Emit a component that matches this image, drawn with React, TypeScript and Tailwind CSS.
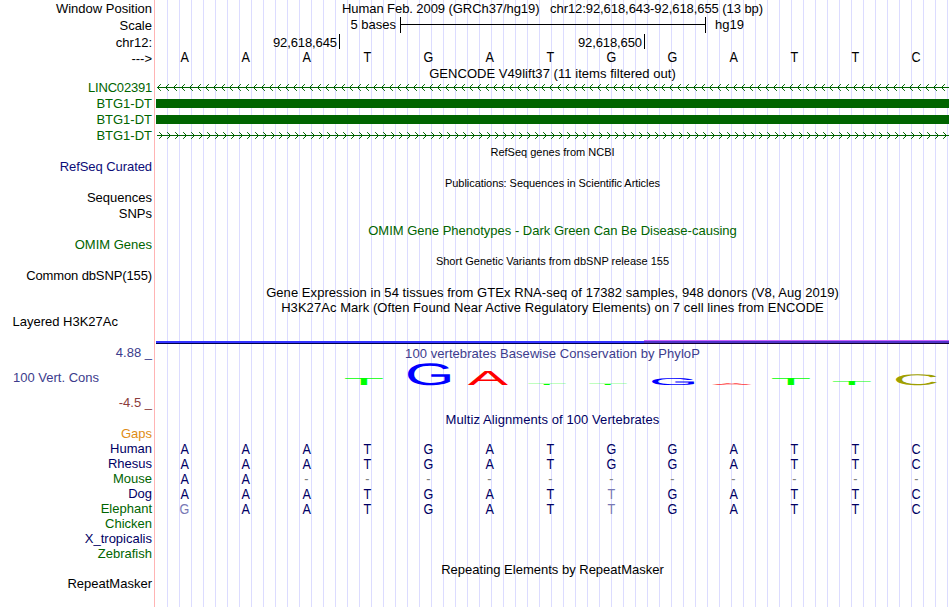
import React from 'react';

type Tone = 'black' | 'green' | 'navy' | 'blue' | 'plum' | 'maroon' | 'orange';

const tones: Record<Tone, string> = {
  black: 'text-black',
  green: 'text-[#006400]',
  navy: 'text-[#000064]',
  blue: 'text-[#0c0c78]',
  plum: 'text-[#3c3c8c]',
  maroon: 'text-[#8c3c3c]',
  orange: 'text-[#e08c14]',
};

const Label: React.FC<{ text: string; tone?: Tone; className?: string }> = ({ text, tone = 'black', className = 'h-4' }) => (
  <div className={`flex shrink-0 items-center justify-end whitespace-pre ${tones[tone]} ${className}`}>{text}</div>
);

const Title: React.FC<{ text: string; tone?: Tone; className?: string }> = ({ text, tone = 'black', className = 'h-4' }) => (
  <div className={`flex shrink-0 items-center justify-center whitespace-pre ${tones[tone]} ${className}`}>{text}</div>
);

const Bases: React.FC<{ seq: string; tone?: Tone; faded?: number[]; className?: string }> = ({
  seq,
  tone = 'navy',
  faded = [],
  className = 'h-[15px] pt-0.5',
}) => (
  <div className={`grid shrink-0 grid-cols-13 text-[14px] ${className}`}>
    {seq.split('').map((base, i) => (
      <span
        key={i}
        className={`flex items-center justify-center pr-1 ${base === '-' ? 'text-[#808080]' : faded.includes(i) ? 'text-[#7878b4]' : tones[tone]}`}
      >
        <span className="scale-x-90">{base}</span>
      </span>
    ))}
  </div>
);

const Intron: React.FC<{ dir: 'left' | 'right' }> = ({ dir }) => (
  <svg className="block h-4 w-full shrink-0" viewBox="0 0 793 16" fill="none" stroke="#006400">
    <path d="M1 7.5H793" />
    {Array.from({ length: 99 }, (_, i) => {
      const x = i * 8;
      return (
        <path
          key={i}
          strokeLinecap="square"
          d={dir === 'left' ? `M${x + 4.5} 4.5L${x + 1.5} 7.5L${x + 4.5} 10.5` : `M${x + 3.5} 4.5L${x + 6.5} 7.5L${x + 3.5} 10.5`}
        />
      );
    })}
  </svg>
);

const Exon: React.FC = () => (
  <div className="h-4 shrink-0 pt-[3px]">
    <div className="h-[9px] w-full bg-[#006400]" />
  </div>
);

// x is the left edge of the glyph, h its height above the baseline
const logo = [
  { base: 'T', x: 189, w: 38, h: 7, color: '#00ff00' },
  { base: 'G', x: 252, w: 43, h: 22, color: '#0000ff' },
  { base: 'A', x: 312, w: 40, h: 14, color: '#ff0000' },
  { base: 'T', x: 372, w: 38, h: 1.2, color: '#00ff00' },
  { base: 'T', x: 433, w: 38, h: 1.2, color: '#00ff00' },
  { base: 'G', x: 496, w: 43, h: 7, color: '#0000ff' },
  { base: 'A', x: 556, w: 40, h: 1.8, color: '#ff0000' },
  { base: 'T', x: 616, w: 38, h: 7, color: '#00ff00' },
  { base: 'T', x: 677, w: 38, h: 4, color: '#00ff00' },
  { base: 'C', x: 740, w: 41, h: 11, color: '#a0a000' },
];

// ink box of each glyph at 100px: left bearing, width, height, descent
const ink: Record<string, number[]> = {
  T: [2.1, 56.9, 68.8, 0],
  G: [5, 67, 70.8, 1],
  A: [0.3, 66.2, 68.8, 0],
  C: [5, 63.6, 70.8, 1],
};

const Logo: React.FC = () => (
  <svg className="block h-[50px] w-full shrink-0 overflow-visible" viewBox="0 0 793 50" textRendering="geometricPrecision">
    {logo.map(({ base, x, w, h, color }, i) => {
      const [left, width, height, descent] = ink[base];
      const sx = w / width;
      const sy = h / height;
      return (
        <text key={i} fontSize="100" fill={color} transform={`translate(${x - left * sx} ${24 - descent * sy}) scale(${sx} ${sy})`}>
          {base}
        </text>
      );
    })}
  </svg>
);

const Labels: React.FC = () => (
  <div className="flex w-[152px] shrink-0 flex-col">
    <Label text="Window Position" className="h-[17px]" />
    <Label text="Scale" className="h-[17px]" />
    <Label text="chr12:" />
    <Label text="--->" className="mb-[13px] h-4" />
    <Label text="LINC02391" tone="green" className="h-4 tracking-[-0.2px]" />
    <Label text="BTG1-DT" tone="green" />
    <Label text="BTG1-DT" tone="green" />
    <Label text="BTG1-DT" tone="green" className="mb-[15px] h-4" />
    <Label text="RefSeq Curated" tone="blue" className="mb-[15px] h-4 tracking-[-0.07px]" />
    <Label text="Sequences" />
    <Label text="SNPs" className="mb-[15px] h-4" />
    <Label text="OMIM Genes" tone="green" className="mb-[15px] h-4" />
    <Label text="Common dbSNP(155)" className="mb-[30px] h-4 tracking-[-0.12px]" />
    <Label text="Layered H3K27Ac" className="mb-[15px] h-4 pr-[34px]" />
    <Label text="4.88 _" tone="plum" className="mb-[9px] h-4" />
    <Label text="100 Vert. Cons" tone="plum" className="mb-[9px] h-4 pr-[53px]" />
    <Label text="-4.5 _" tone="maroon" className="mb-4 h-4" />
    <Label text="Gaps" tone="orange" className="h-[15px]" />
    <Label text="Human" tone="navy" className="h-[15px]" />
    <Label text="Rhesus" tone="navy" className="h-[15px]" />
    <Label text="Mouse" tone="green" className="h-[15px]" />
    <Label text="Dog" tone="navy" className="h-[15px]" />
    <Label text="Elephant" tone="green" className="h-[15px]" />
    <Label text="Chicken" tone="green" className="h-[15px]" />
    <Label text="X_tropicalis" tone="navy" className="h-[15px]" />
    <Label text="Zebrafish" tone="green" className="mb-[14px] h-[15px]" />
    <Label text="RepeatMasker" />
  </div>
);

const Tracks: React.FC = () => (
  <div className="flex h-full w-[793px] shrink-0 flex-col bg-[repeating-linear-gradient(90deg,transparent_0_11px,#dcdcff_11px_12px)]">
    <Title text="Human Feb. 2009 (GRCh37/hg19)   chr12:92,618,643-92,618,655 (13 bp)" className="h-4 tracking-[-0.07px]" />
    <div className="flex h-[17px] shrink-0 items-center">
      <span className="w-[241px] pr-px text-right">5 bases</span>
      <div className="ml-[3px] flex h-4 w-[306px] items-center border-x border-black">
        <div className="h-px w-full bg-black" />
      </div>
      <span className="ml-[9px]">hg19</span>
    </div>
    <div className="flex h-4 shrink-0 items-center">
      <span className="flex h-[15px] w-[184px] items-center justify-end border-r border-black pt-0.5 pr-0.5 tracking-[-0.1px]">92,618,645</span>
      <span className="flex h-[15px] w-[305px] items-center justify-end border-r border-black pt-0.5 pr-0.5 tracking-[-0.1px]">92,618,650</span>
    </div>
    <Bases seq="AAATGATGGATTC" tone="black" className="h-4" />
    <Title text="GENCODE V49lift37 (11 items filtered out)" className="h-[15px] pt-0.5 tracking-[0.05px]" />
    <Intron dir="left" />
    <Exon />
    <Exon />
    <Intron dir="right" />
    <Title text="RefSeq genes from NCBI" className="mb-[15px] h-4 text-[11px]" />
    <Title text="Publications: Sequences in Scientific Articles" className="mb-[31px] h-4 text-[11px] tracking-[-0.06px]" />
    <Title text="OMIM Gene Phenotypes - Dark Green Can Be Disease-causing" tone="green" className="mb-[15px] h-4" />
    <Title text="Short Genetic Variants from dbSNP release 155" className="mb-4 h-4 text-[11px]" />
    <Title
      text="Gene Expression in 54 tissues from GTEx RNA-seq of 17382 samples, 948 donors (V8, Aug 2019)"
      className="h-[15px] tracking-[0.06px]"
    />
    <Title
      text="H3K27Ac Mark (Often Found Near Active Regulatory Elements) on 7 cell lines from ENCODE"
      className="mb-[25px] h-[15px] tracking-[0.06px]"
    />
    <div className="flex h-1 shrink-0">
      <div className="mt-px w-[488px] border-b border-[#000050] bg-[#3232ff]" />
      <div className="flex-1 border-t border-b border-t-[#c864ff] border-b-[#140032] bg-[#5032c8]" />
    </div>
    <Title text="100 vertebrates Basewise Conservation by PhyloP" tone="plum" className="mt-px h-4 tracking-[0.06px]" />
    <Logo />
    <Title text="Multiz Alignments of 100 Vertebrates" tone="navy" className="mb-[13px] h-4 tracking-[0.08px]" />
    <Bases seq="AAATGATGGATTC" />
    <Bases seq="AAATGATGGATTC" />
    <Bases seq="AA-----------" />
    <Bases seq="AAATGATTGATTC" faded={[7]} />
    <Bases seq="GAATGATTGATTC" faded={[0, 7]} />
    <Title text="Repeating Elements by RepeatMasker" className="mt-[46px] h-4" />
  </div>
);

export default function App() {
  return (
    <div className="flex h-[607px] w-[950px] overflow-hidden bg-white font-['Liberation_Sans',Arial,sans-serif] text-[13px] leading-none">
      <Labels />
      <div className="mr-px ml-0.5 w-px shrink-0 bg-[#ffb4b4]" />
      <Tracks />
    </div>
  );
}
